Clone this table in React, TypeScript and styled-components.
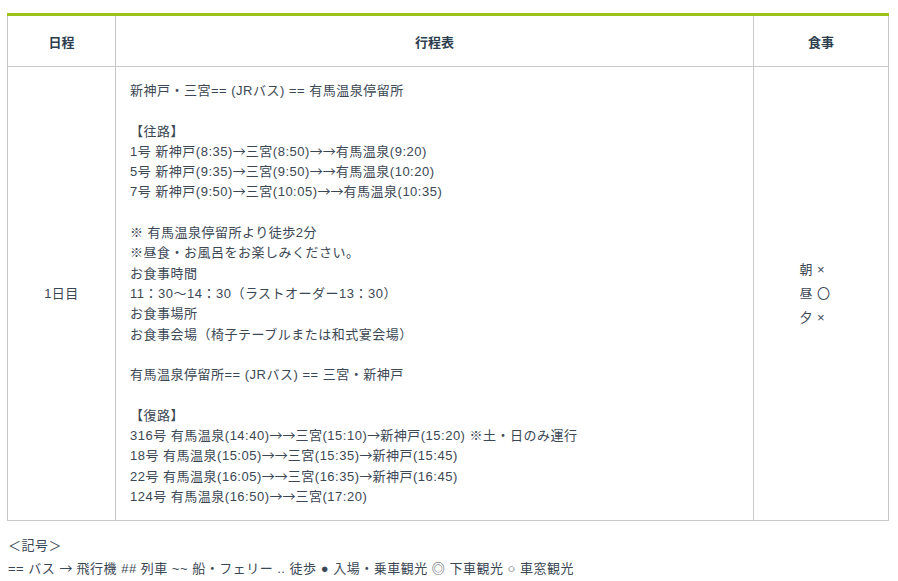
import React from 'react';
import styled, { createGlobalStyle } from 'styled-components';

const GlobalStyle = createGlobalStyle`
    body {
        margin: 0;
        background: #fff;
        font-family: "Liberation Sans", "Noto Sans CJK JP", sans-serif;
        color: #3b4754;
    }
`

const PageWrapper = styled.div`
    padding: 13px 9px 0 7px;
`

const Schedule = styled.table`
    width: 100%;
    border-collapse: collapse;
    border-top: 3px solid #9cc21a;
    font-size: 13px;
    letter-spacing: 0.5px;
`

const HeadCell = styled.th<{ $width?: number }>`
    width: ${props => props.$width ? `${props.$width}px` : 'auto'};
    height: 50px;
    padding: 0;
    border: 1px solid #c8c8c8;
    border-top: none;
    font-weight: bold;
    color: #2d3e4e;
    text-align: center;
    vertical-align: middle;
    letter-spacing: 0;
`

const BodyCell = styled.td<{ $align?: string }>`
    padding: 14px 14px 13px;
    border: 1px solid #c8c8c8;
    text-align: ${props => props.$align || 'left'};
    vertical-align: middle;
    line-height: 20.3px;
`

const Line = styled.div`
    height: 20.3px;
    white-space: nowrap;
`

// full-width arrow glyph, like the Japanese font of the original
const Arrow = styled.span`
    font-family: "Noto Sans CJK JP", sans-serif;
    letter-spacing: 0;
    line-height: 0;
`

const MealList = styled.div`
    display: inline-block;
    text-align: left;
    line-height: 24px;
    margin-right: 12px;
`

const Legend = styled.div`
    padding: 13px 0 0 1px;
    font-size: 13px;
    line-height: 23px;
    letter-spacing: 0.5px;
`

const LegendLine = styled.div`
    height: 23px;
    white-space: nowrap;
`

// Lines of the itinerary cell, empty string = blank line
const itinerary: string[] = [
    '新神戸・三宮== (JRバス) == 有馬温泉停留所',
    '',
    '【往路】',
    '1号 新神戸(8:35)→三宮(8:50)→→有馬温泉(9:20)',
    '5号 新神戸(9:35)→三宮(9:50)→→有馬温泉(10:20)',
    '7号 新神戸(9:50)→三宮(10:05)→→有馬温泉(10:35)',
    '',
    '※ 有馬温泉停留所より徒歩2分',
    '※昼食・お風呂をお楽しみください。',
    'お食事時間',
    '11：30～14：30（ラストオーダー13：30）',
    'お食事場所',
    'お食事会場（椅子テーブルまたは和式宴会場）',
    '',
    '有馬温泉停留所== (JRバス) == 三宮・新神戸',
    '',
    '【復路】',
    '316号 有馬温泉(14:40)→→三宮(15:10)→新神戸(15:20) ※土・日のみ運行',
    '18号 有馬温泉(15:05)→→三宮(15:35)→新神戸(15:45)',
    '22号 有馬温泉(16:05)→→三宮(16:35)→新神戸(16:45)',
    '124号 有馬温泉(16:50)→→三宮(17:20)',
]

const meals = ['朝 ×', '昼 〇', '夕 ×']

const legendText = '== バス → 飛行機 ## 列車 ~~ 船・フェリー .. 徒歩 ● 入場・乗車観光 ◎ 下車観光 ○ 車窓観光'

/**
 * Split a text on arrows so they can be drawn in the wide font
 * @param {string} text line to render
 */
const withArrows = (text: string) => {
    return text.split(/(→)/).map((part, i) =>
        part === '→' ? <Arrow key={i}>→</Arrow> : <React.Fragment key={i}>{part}</React.Fragment>
    )
}

const App: React.FC = () => {
    return (
        <PageWrapper>
            <GlobalStyle />
            <Schedule>
                <thead>
                    <tr>
                        <HeadCell $width={107}>日程</HeadCell>
                        <HeadCell>行程表</HeadCell>
                        <HeadCell $width={134}>食事</HeadCell>
                    </tr>
                </thead>
                <tbody>
                    <tr>
                        <BodyCell $align="center">1日目</BodyCell>
                        <BodyCell>
                            {itinerary.map((text, i) => <Line key={i}>{withArrows(text)}</Line>)}
                        </BodyCell>
                        <BodyCell $align="center">
                            <MealList>
                                {meals.map(meal => <div key={meal}>{meal}</div>)}
                            </MealList>
                        </BodyCell>
                    </tr>
                </tbody>
            </Schedule>
            <Legend>
                <LegendLine>＜記号＞</LegendLine>
                <LegendLine>{withArrows(legendText)}</LegendLine>
            </Legend>
        </PageWrapper>
    )
}

export default App;
